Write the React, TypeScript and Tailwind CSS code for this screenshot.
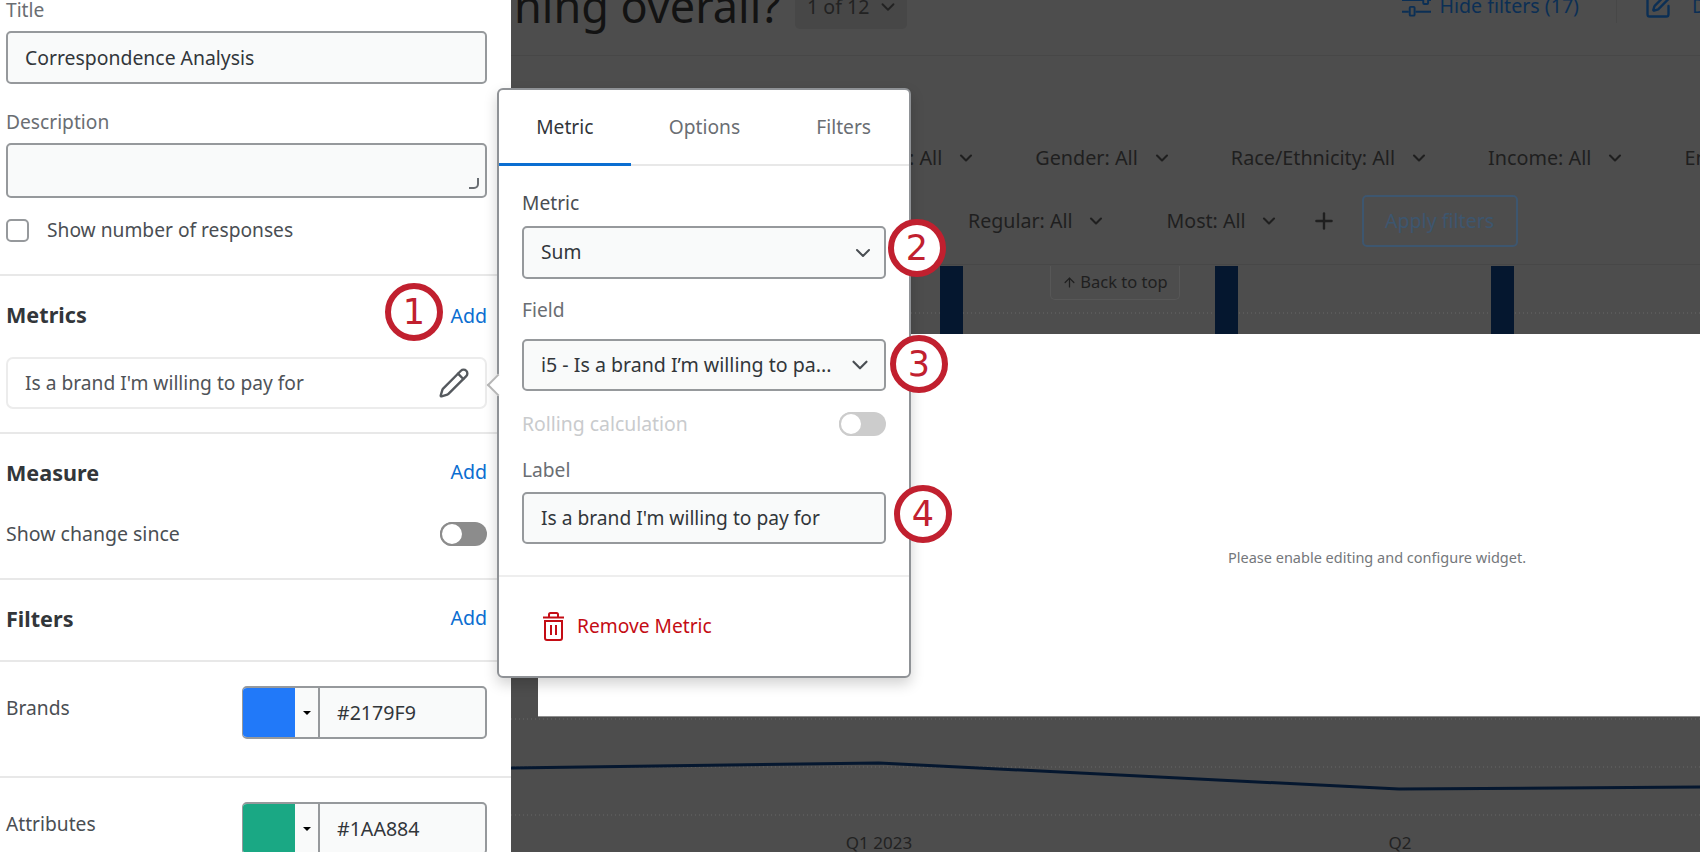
import React from 'react';
import { ChevronDown, Pencil, Plus, SquarePen, ArrowUp } from 'lucide-react';

const topFilters = ['Age: All', 'Gender: All', 'Race/Ethnicity: All', 'Income: All', 'Employment: All'];

const Callout = ({ n, className }: { n: number; className: string }) => (
  <div
    className={`absolute z-30 flex h-[58px] w-[58px] items-center justify-center rounded-full border-[6px] border-[#c1202f] bg-white font-['DejaVu_Sans',sans-serif] text-[35px] leading-none text-[#c1202f] ${className}`}
  >
    {n}
  </div>
);

const Toggle = ({ muted }: { muted?: boolean }) => (
  <div className={`flex h-[24px] w-[47px] items-center rounded-full ${muted ? 'bg-[#cccccc]' : 'bg-[#8c8c8c]'}`}>
    <div className={`h-[24px] w-[24px] rounded-full border-2 bg-white ${muted ? 'border-[#cccccc]' : 'border-[#8c8c8c]'}`} />
  </div>
);

const Field = ({ children, className }: { children: React.ReactNode; className: string }) => (
  <div className={`flex items-center rounded-[5px] border-2 border-[#96999c] bg-[#f9fafa] text-[#32363a] ${className}`}>
    {children}
  </div>
);

const SectionHead = ({ title, addClass }: { title: string; addClass: string }) => (
  <div className="flex h-[30px] items-center justify-between">
    <span className="text-[21.6px] font-bold text-[#32363a]">{title}</span>
    <span className={`text-[19.6px] text-[#0a6ed1] ${addClass}`}>Add</span>
  </div>
);

const ColorRow = ({ name, color, hex, border }: { name: string; color: string; hex: string; border: boolean }) => (
  <div className={`flex h-[116px] items-start justify-between pl-[6px] pr-[24px] pt-[24px] ${border ? 'border-b-2 border-[#e8e8e8]' : ''}`}>
    <span className="mt-[8px] text-[19.2px] leading-[28px] text-[#4a4e53]">{name}</span>
    <div className="flex h-[53px] w-[245px] overflow-hidden rounded-[5px] border-2 border-l border-[#96999c] bg-[#f9fafa]">
      <div className={`w-[52px] ${color}`} />
      <div className="flex w-[25px] items-center justify-center border-r-2 border-[#96999c]">
        <div className="h-0 w-0 border-x-[4px] border-t-[4px] border-x-transparent border-t-black" />
      </div>
      <span className="flex items-center pl-[17px] text-[19.6px] text-[#32363a]">{hex}</span>
    </div>
  </div>
);

const Sidebar = () => (
  <aside className="relative z-10 h-[852px] w-[511px] shrink-0 overflow-hidden bg-white">
    <div className="border-b-2 border-[#e8e8e8] pb-[32px] pl-[6px] pr-[24px]">
      <div className="-mt-[4px] h-[28px] text-[19.2px] leading-[28px] text-[#6a6e73]">Title</div>
      <Field className="mt-[7px] h-[53px] pl-[17px] text-[19.4px]">Correspondence Analysis</Field>
      <div className="mt-[24px] h-[28px] text-[19.2px] leading-[28px] text-[#6a6e73]">Description</div>
      <Field className="relative mt-[7px] h-[55px]">
        <svg className="absolute bottom-[6px] right-[5px]" width="13" height="13" viewBox="0 0 13 13" fill="none">
          <path d="M11 1v6a4 4 0 0 1-4 4H2" stroke="#6a6e73" strokeWidth="2" />
        </svg>
      </Field>
      <div className="mt-[21px] flex h-[23px] items-center">
        <div className="h-[23px] w-[23px] rounded-[5px] border-2 border-[#96999c]" />
        <span className="ml-[18px] text-[19.2px] text-[#4a4e53]">Show number of responses</span>
      </div>
    </div>

    <div className="h-[158px] border-b-2 border-[#e8e8e8] pl-[6px] pr-[24px] pt-[24px]">
      <SectionHead title="Metrics" addClass="mt-[2px]" />
      <div className="mt-[27px] flex h-[52px] items-center justify-between rounded-[7px] border-2 border-[#ececec] pl-[17px] pr-[15px] text-[19.2px] text-[#4f5358]">
        <span>Is a brand I'm willing to pay for</span>
        <Pencil size={32} strokeWidth={1.8} className="text-[#55595e]" />
      </div>
    </div>

    <div className="h-[146px] border-b-2 border-[#e8e8e8] pl-[6px] pr-[24px] pt-[24px]">
      <SectionHead title="Measure" addClass="-mt-[2px]" />
      <div className="mt-[34px] flex h-[24px] items-center justify-between">
        <span className="text-[19.5px] text-[#4a4e53]">Show change since</span>
        <Toggle />
      </div>
    </div>

    <div className="h-[82px] border-b-2 border-[#e8e8e8] pl-[6px] pr-[24px] pt-[24px]">
      <SectionHead title="Filters" addClass="-mt-[2px]" />
    </div>

    <ColorRow name="Brands" color="bg-[#2179f9]" hex="#2179F9" border />
    <ColorRow name="Attributes" color="bg-[#1aa884]" hex="#1AA884" border={false} />
  </aside>
);

const Dashboard = () => (
  <main className="relative flex h-[852px] flex-1 flex-col overflow-hidden bg-[#4d4d4d]">
    <header className="flex h-[56px] shrink-0 items-start justify-between border-b border-[#474747]">
      <div className="flex items-start">
        <span className="-mt-[24px] w-[284px] shrink-0 whitespace-nowrap pl-[3px] text-[45px] leading-[60px] text-[#131313]">ning overall?</span>
        <div className="-mt-[15px] flex h-[44px] w-[112px] items-center gap-[8px] rounded-[5px] bg-[#474747] pl-[12px] text-[19.6px] text-[#222222]">
          1 of 12 <ChevronDown size={22} />
        </div>
      </div>
      <div className="flex items-start">
        <svg className="-mt-[10px]" width="29" height="28" viewBox="0 0 30 28" fill="none" stroke="#0b2f55" strokeWidth="2">
          <path d="M0 10h22M27 10h3M0 22h7M14 22h16" />
          <rect x="22" y="5" width="5" height="9" rx="1" />
          <rect x="8" y="17" width="5" height="9" rx="1" />
        </svg>
        <span className="-mt-[8px] ml-[9px] text-[19.6px] leading-[28px] text-[#0b2f55]">Hide filters (17)</span>
        <div className="ml-[37px] h-[23px] w-px bg-[#474747]" />
        <SquarePen size={28} strokeWidth={2} className="-mt-[8px] ml-[27px] text-[#0b2f55]" />
        <span className="-mt-[8px] ml-[20px] w-[8px] overflow-hidden text-[19.6px] leading-[28px] text-[#0b2f55]">D</span>
      </div>
    </header>

    <section className="h-[209px] shrink-0 border-b border-[#474747]">
      <div className="mt-[88px] flex h-[28px] items-center whitespace-nowrap pl-[362px] text-[19.8px] text-[#1f1f1f]">
        {topFilters.map((label) => (
          <div key={label} className="mr-[59px] flex shrink-0 items-center gap-[14px]">
            <span>{label}</span>
            <ChevronDown size={20} strokeWidth={2.5} />
          </div>
        ))}
      </div>
      <div className="mt-[23px] flex h-[52px] items-center pl-[457px] text-[19.6px] text-[#1f1f1f]">
        <span>Regular: All</span>
        <ChevronDown size={20} strokeWidth={2.5} className="ml-[13px]" />
        <span className="ml-[61px]">Most: All</span>
        <ChevronDown size={20} strokeWidth={2.5} className="ml-[13px]" />
        <Plus size={26} strokeWidth={2.2} className="ml-[32px]" />
        <div className="ml-[25px] flex h-[52px] w-[156px] items-center justify-center rounded-[5px] border-2 border-[#3d566f] text-[#3d566f]">
          Apply filters
        </div>
      </div>
    </section>

    <section className="relative flex-1">
      <svg className="absolute inset-0" width="1189" height="587" viewBox="0 0 1189 587" fill="none">
        <path d="M0 48h1189M0 454h1189M0 502h1189M0 550h1189" stroke="#5f5f5f" strokeWidth="1.5" strokeDasharray="1 3" />
        <path d="M429 1h23v68h-23zM704 1h23v68h-23zM980 1h23v68h-23z" fill="#05172f" />
        <path d="M0 503 368 498 888 524 1189 522" stroke="#05172f" strokeWidth="3" />
      </svg>
      <div className="absolute left-[539px] top-[1px] flex h-[34px] w-[130px] items-center justify-center gap-[3px] rounded-b-[5px] border border-t-0 border-[#575757] bg-[#4d4d4d] text-[16.5px] text-[#1f1f1f]">
        <ArrowUp size={15} /> Back to top
      </div>
      <div className="relative ml-[27px] mt-[69px] h-[383px] border-b border-[#8f8f8f] bg-white pl-[690px] pt-[213px] text-[14.5px] text-[#74777b]">
        <span className="whitespace-nowrap">Please enable editing and configure widget.</span>
      </div>
      <div className="absolute left-[318px] top-[565px] w-[100px] text-center text-[17px] text-[#222222]">Q1 2023</div>
      <div className="absolute left-[839px] top-[565px] w-[100px] text-center text-[17px] text-[#222222]">Q2</div>
    </section>
  </main>
);

const Popover = () => (
  <div className="absolute left-[497px] top-[88px] z-20 h-[590px] w-[414px] rounded-[6px] border-2 border-[#8f9296] bg-white shadow-[0_6px_14px_rgba(0,0,0,0.18)]">
    <div className="absolute -left-[9px] top-[287px] h-[16px] w-[16px] rotate-45 border-b-2 border-l-2 border-[#b5b5b5] bg-white" />
    <div className="relative flex h-[76px] border-b-2 border-[#e8e8e8] text-[19.2px]">
      <div className="-mb-[2px] flex w-[132px] items-center justify-center border-b-[3px] border-[#0a6ed1] pt-[2px] text-[#32363a]">Metric</div>
      <div className="flex w-[148px] items-center justify-center text-[#6a6e73]">Options</div>
      <div className="flex w-[131px] items-center justify-center text-[#6a6e73]">Filters</div>
    </div>
    <div className="relative px-[23px]">
      <div className="mt-[23px] h-[28px] text-[19.2px] leading-[28px] text-[#4a4e53]">Metric</div>
      <Field className="mt-[9px] h-[53px] justify-between pl-[17px] pr-[9px] text-[19.2px]">
        <span>Sum</span>
        <ChevronDown size={24} strokeWidth={2} className="text-[#4a4e53]" />
      </Field>
      <div className="mt-[17px] h-[28px] text-[19.2px] leading-[28px] text-[#6a6e73]">Field</div>
      <Field className="mt-[15px] h-[52px] justify-between pl-[17px] pr-[11px] text-[19.6px]">
        <span className="whitespace-nowrap">i5 - Is a brand I’m willing to pa...</span>
        <ChevronDown size={26} strokeWidth={2} className="text-[#4a4e53]" />
      </Field>
      <div className="mt-[21px] flex h-[24px] items-center justify-between">
        <span className="text-[19.4px] text-[#c9cbcd]">Rolling calculation</span>
        <Toggle muted />
      </div>
      <div className="mt-[20px] h-[28px] text-[19.2px] leading-[28px] text-[#6a6e73]">Label</div>
      <Field className="mt-[8px] h-[52px] pl-[17px] text-[19.2px]">Is a brand I'm willing to pay for</Field>
    </div>
    <div className="mt-[31px] flex h-[100px] items-center border-t-2 border-[#eeeeee] pl-[43px] text-[19.2px] text-[#c40c14]">
      <svg width="23" height="29" viewBox="0 0 23 29" fill="none" stroke="#c40c14" strokeWidth="2">
        <path d="M1 5.5h21M7 5V2.5A1.5 1.5 0 0 1 8.5 1h6A1.5 1.5 0 0 1 16 2.5V5M3 9v17a2 2 0 0 0 2 2h13a2 2 0 0 0 2-2V9zM9 13v10M14 13v10" />
      </svg>
      <span className="ml-[12px]">Remove Metric</span>
    </div>
  </div>
);

export default function App() {
  return (
    <div className="relative flex h-[852px] w-[1700px] overflow-hidden bg-white font-['Noto_Sans',sans-serif]">
      <Sidebar />
      <Dashboard />
      <Popover />
      <Callout n={1} className="left-[385px] top-[283px]" />
      <Callout n={2} className="left-[888px] top-[219px]" />
      <Callout n={3} className="left-[890px] top-[335px]" />
      <Callout n={4} className="left-[894px] top-[485px]" />
    </div>
  );
}
